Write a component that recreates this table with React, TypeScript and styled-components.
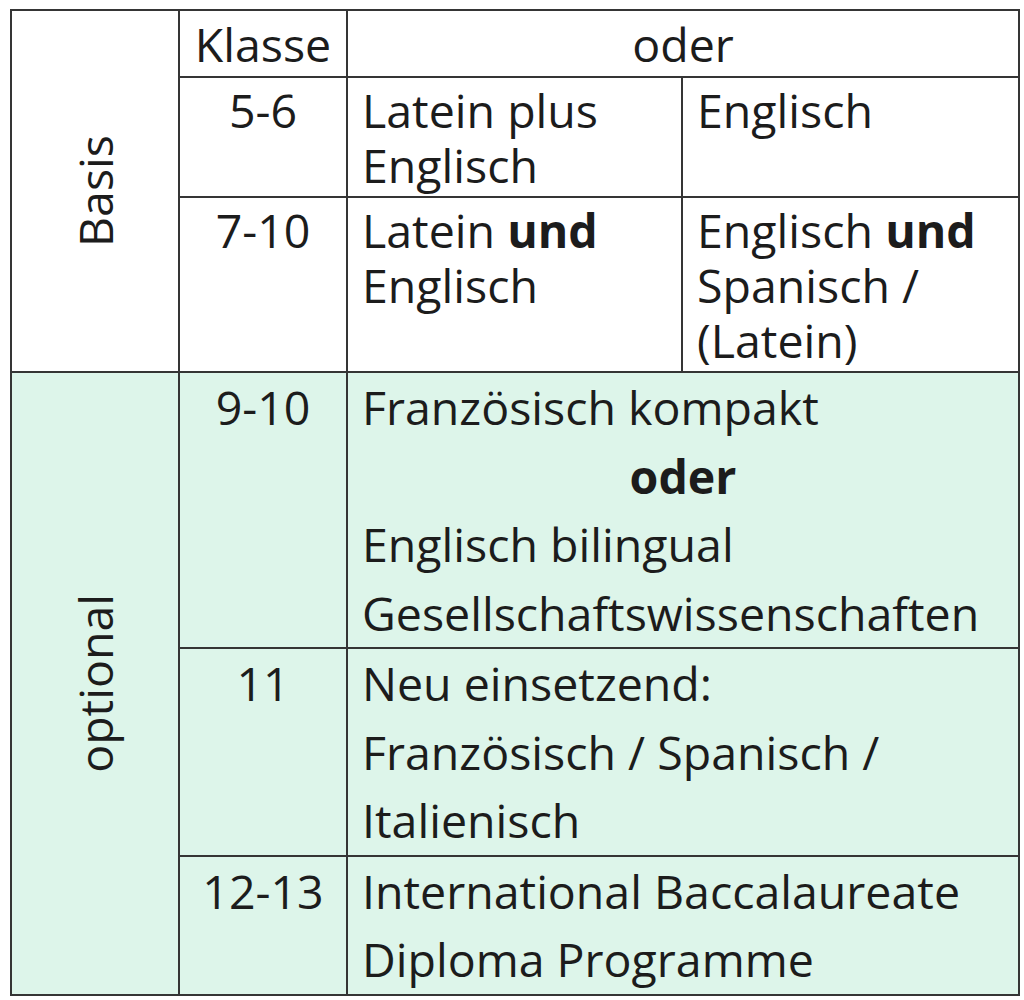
import { createGlobalStyle, styled } from "styled-components";

const GlobalStyle = createGlobalStyle`
  html, body {
    margin: 0;
    padding: 0;
    background: #ffffff;
  }
  body {
    font-family: "Open Sans", "Noto Sans", sans-serif;
    color: #1c1c1c;
  }
`;

const rows = {
  basis: [
    { klasse: "5-6" },
    { klasse: "7-10" },
  ],
};

export default function App() {
  return (
    <>
      <GlobalStyle />
      <Page>
        <Table>
          <colgroup>
            <col style={{ width: 168 }} />
            <col style={{ width: 168 }} />
            <col style={{ width: 335 }} />
            <col style={{ width: 337 }} />
          </colgroup>
          <tbody>
            <tr>
              <GroupCell rowSpan={3}>
                <Rotated>Basis</Rotated>
              </GroupCell>
              <Cell $align="center" $head>
                Klasse
              </Cell>
              <Cell $align="center" $head colSpan={2}>
                oder
              </Cell>
            </tr>
            <tr>
              <Cell $align="center">{rows.basis[0].klasse}</Cell>
              <Cell>
                Latein plus
                <br />
                Englisch
              </Cell>
              <Cell>Englisch</Cell>
            </tr>
            <tr>
              <Cell $align="center">{rows.basis[1].klasse}</Cell>
              <Cell>
                Latein <b>und</b>
                <br />
                Englisch
              </Cell>
              <Cell>
                Englisch <b>und</b>
                <br />
                Spanisch /
                <br />
                (Latein)
              </Cell>
            </tr>

            <tr>
              <GroupCell rowSpan={3} $optional>
                <Rotated>optional</Rotated>
              </GroupCell>
              <Cell $align="center" $optional>
                9-10
              </Cell>
              <Cell colSpan={2} $optional>
                <Line>Französisch kompakt</Line>
                <Line $center>
                  <b>oder</b>
                </Line>
                <Line>Englisch bilingual</Line>
                <Line>Gesellschaftswissenschaften</Line>
              </Cell>
            </tr>
            <tr>
              <Cell $align="center" $optional>
                11
              </Cell>
              <Cell colSpan={2} $optional>
                <Line>Neu einsetzend:</Line>
                <Line>Französisch / Spanisch /</Line>
                <Line>Italienisch</Line>
              </Cell>
            </tr>
            <tr>
              <Cell $align="center" $optional>
                12-13
              </Cell>
              <Cell colSpan={2} $optional>
                <Line>International Baccalaureate</Line>
                <Line>Diploma Programme</Line>
              </Cell>
            </tr>
          </tbody>
        </Table>
      </Page>
    </>
  );
}

const Page = styled.div`
  padding: 9px 6px 8px 10px;
`;

const Table = styled.table`
  width: 1008px;
  border-collapse: collapse;
  table-layout: fixed;
  border: 2px solid #353535;
  font-size: 46.5px;
`;

const Cell = styled.td<{
  $align?: "left" | "center";
  $optional?: boolean;
  $head?: boolean;
}>`
  border: 2px solid #353535;
  vertical-align: top;
  text-align: ${(p) => p.$align || "left"};
  background: ${(p) => (p.$optional ? "#ddf5ea" : "#ffffff")};
  padding: ${(p) =>
    p.$optional ? "0 14px" : p.$head ? "6px 14px 4px" : "5px 14px 3px"};
  line-height: ${(p) => (p.$optional ? "68.5px" : "55px")};

  b {
    font-weight: 700;
  }
`;

const GroupCell = styled.td<{ $optional?: boolean }>`
  border: 2px solid #353535;
  vertical-align: middle;
  text-align: center;
  background: ${(p) => (p.$optional ? "#ddf5ea" : "#ffffff")};
  padding: 0;
  font-size: 0;
  line-height: 0;
`;

const Rotated = styled.span`
  display: inline-block;
  vertical-align: middle;
  writing-mode: vertical-rl;
  transform: rotate(180deg);
  font-size: 46.5px;
  line-height: 1;
`;

const Line = styled.div<{ $center?: boolean }>`
  text-align: ${(p) => (p.$center ? "center" : "left")};
`;
